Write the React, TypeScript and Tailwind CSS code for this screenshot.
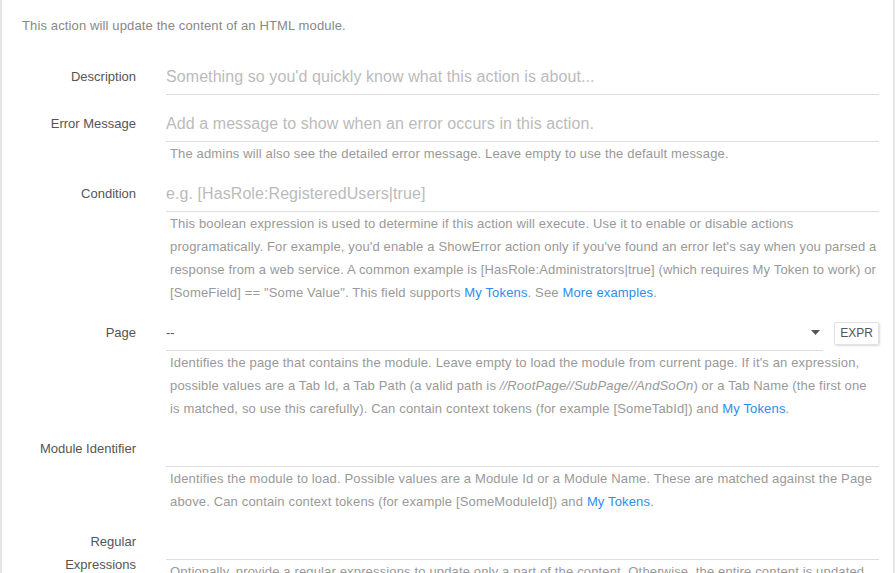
import type { ReactElement, ReactNode } from 'react';

const font = { fontFamily: '"Liberation Sans", Arial, sans-serif' };

function Link({ children }: { children: ReactNode }): ReactElement {
  return <a className="text-[#2b8ef0]">{children}</a>;
}

// help text, one child per visual line (the reference wraps at fixed points)
function Help({ lines }: { lines: ReactNode[] }): ReactElement {
  return (
    <div className="pl-[4px] text-[13px] leading-[23px] tracking-[0.15px] whitespace-nowrap text-[#999]">
      {lines.map((line, i) => (
        <div key={i}>{line}</div>
      ))}
    </div>
  );
}

interface RowProps {
  label: ReactNode;
  placeholder?: string;
  help?: ReactNode[];
  input?: ReactNode;
}

function Row({ label, placeholder, help, input }: RowProps): ReactElement {
  return (
    <div className="mb-[12px] grid grid-cols-[134px_1fr] gap-x-[30px]">
      <div className="pt-[5px] text-right text-[13px] leading-[23px] text-[#555]">{label}</div>
      <div className="min-w-0">
        {input ?? (
          <div className="flex h-[35px] items-center border-b border-[#ddd] pb-[1px] text-[16px] tracking-[0.08px] text-[#bbb]">
            {placeholder}
          </div>
        )}
        {help ? <Help lines={help} /> : null}
      </div>
    </div>
  );
}

export default function App(): ReactElement {
  return (
    <div style={font} className="h-[573px] overflow-hidden border-x-2 border-[#e6e6e6] bg-white pr-[14px]">
      <p className="pl-[20px] pt-[17px] text-[13px] leading-[17px] tracking-[0.13px] text-[#888]">
        This action will update the content of an HTML module.
      </p>
      <div className="pt-[26px]">
        <Row label="Description" placeholder="Something so you'd quickly know what this action is about..." />
        <Row
          label="Error Message"
          placeholder="Add a message to show when an error occurs in this action."
          help={['The admins will also see the detailed error message. Leave empty to use the default message.']}
        />
        <Row
          label="Condition"
          placeholder="e.g. [HasRole:RegisteredUsers|true]"
          help={[
            'This boolean expression is used to determine if this action will execute. Use it to enable or disable actions',
            "programatically. For example, you'd enable a ShowError action only if you've found an error let's say when you parsed a",
            'response from a web service. A common example is [HasRole:Administrators|true] (which requires My Token to work) or',
            <>
              [SomeField] == "Some Value". This field supports <Link>My Tokens</Link>. See <Link>More examples</Link>.
            </>,
          ]}
        />
        <Row
          label="Page"
          input={
            <div className="flex h-[35px] items-center gap-[11px]">
              <div className="flex h-[35px] flex-1 items-center justify-between border-b border-[#ddd] pr-[3px]">
                <span className="text-[13px] text-[#555]">--</span>
                <svg width="9" height="5" viewBox="0 0 9 5" className="mb-[2px]">
                  <path d="M0 0h9L4.5 5z" fill="#555" />
                </svg>
              </div>
              <button className="mb-[1px] h-[23px] rounded-[2px] border border-[#e3e3e3] px-[5px] text-[12px] text-[#555] shadow-[1px_1px_2px_rgba(0,0,0,0.15)]">
                EXPR
              </button>
            </div>
          }
          help={[
            "Identifies the page that contains the module. Leave empty to load the module from current page. If it's an expression,",
            <>
              possible values are a Tab Id, a Tab Path (a valid path is <i>//RootPage//SubPage//AndSoOn</i>) or a Tab Name
              (the first one
            </>,
            <>
              is matched, so use this carefully). Can contain context tokens (for example [SomeTabId]) and{' '}
              <Link>My Tokens</Link>.
            </>,
          ]}
        />
        <Row
          label="Module Identifier"
          placeholder=""
          help={[
            'Identifies the module to load. Possible values are a Module Id or a Module Name. These are matched against the Page',
            <>
              above. Can contain context tokens (for example [SomeModuleId]) and <Link>My Tokens</Link>.
            </>,
          ]}
        />
        <Row
          label={
            <>
              Regular
              <br />
              Expressions
            </>
          }
          placeholder=""
          help={['Optionally, provide a regular expressions to update only a part of the content. Otherwise, the entire content is updated.']}
        />
      </div>
    </div>
  );
}
